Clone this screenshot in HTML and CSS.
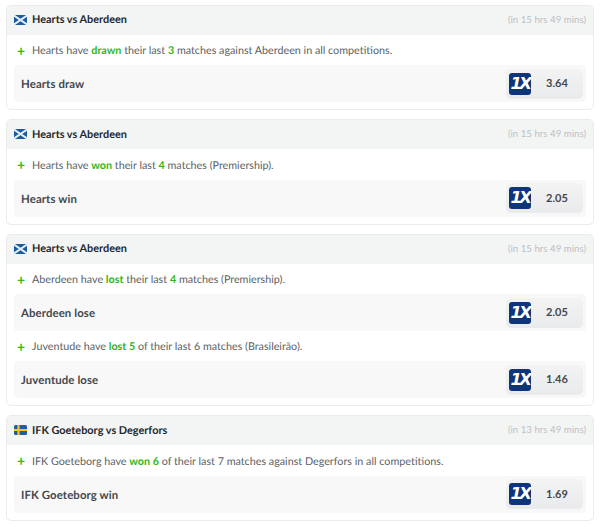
FILE: index.html
```html
<!DOCTYPE html>
<html lang="en">
<head>
<meta charset="utf-8">
<title>Trends</title>
<link rel="stylesheet" href="styles.css">
</head>
<body>
<svg class="defs" width="0" height="0" aria-hidden="true">
  <symbol id="sco" viewBox="0 0 13 10"><rect width="13" height="10" rx="1.5" fill="#1a5c9e"/><path d="M0 .5 13 9.5M13 .5 0 9.5" stroke="#e8eef5" stroke-width="2"/></symbol>
  <symbol id="swe" viewBox="0 0 13 10"><rect width="13" height="10" rx="1.5" fill="#1f5f9f"/><path d="M0 5H13M4.5 0V10" stroke="#f4c81e" stroke-width="2.2"/></symbol>
</svg>

<section class="card">
  <header class="head"><svg class="flag"><use href="#sco"/></svg><span class="title">Hearts vs Aberdeen</span><span class="time">(in 15 hrs 49 mins)</span></header>
  <div class="body">
    <p class="trend"><span class="plus">+</span><span>Hearts have <b>drawn</b> their last <b>3</b> matches against Aberdeen in all competitions.</span></p>
    <div class="bet"><span class="name">Hearts draw</span><span class="odds"><span class="logo">1X</span><span class="price">3.64</span></span></div>
  </div>
</section>

<section class="card">
  <header class="head"><svg class="flag"><use href="#sco"/></svg><span class="title">Hearts vs Aberdeen</span><span class="time">(in 15 hrs 49 mins)</span></header>
  <div class="body">
    <p class="trend"><span class="plus">+</span><span>Hearts have <b>won</b> their last <b>4</b> matches (Premiership).</span></p>
    <div class="bet"><span class="name">Hearts win</span><span class="odds"><span class="logo">1X</span><span class="price">2.05</span></span></div>
  </div>
</section>

<section class="card">
  <header class="head"><svg class="flag"><use href="#sco"/></svg><span class="title">Hearts vs Aberdeen</span><span class="time">(in 15 hrs 49 mins)</span></header>
  <div class="body">
    <p class="trend"><span class="plus">+</span><span>Aberdeen have <b>lost</b> their last <b>4</b> matches (Premiership).</span></p>
    <div class="bet"><span class="name">Aberdeen lose</span><span class="odds"><span class="logo">1X</span><span class="price">2.05</span></span></div>
    <p class="trend trend-next"><span class="plus">+</span><span>Juventude have <b>lost 5</b> of their last 6 matches (Brasileirão).</span></p>
    <div class="bet"><span class="name">Juventude lose</span><span class="odds"><span class="logo">1X</span><span class="price">1.46</span></span></div>
  </div>
</section>

<section class="card">
  <header class="head"><svg class="flag"><use href="#swe"/></svg><span class="title">IFK Goeteborg vs Degerfors</span><span class="time">(in 13 hrs 49 mins)</span></header>
  <div class="body">
    <p class="trend"><span class="plus">+</span><span>IFK Goeteborg have <b>won 6</b> of their last 7 matches against Degerfors in all competitions.</span></p>
    <div class="bet"><span class="name">IFK Goeteborg win</span><span class="odds"><span class="logo">1X</span><span class="price">1.69</span></span></div>
  </div>
</section>
</body>
</html>
```
FILE: styles.css
```css
* { box-sizing: border-box; }
html, body { margin: 0; background: #fff; }
body {
  padding: 4.5px 6px 0;
  font-family: Lato, "Open Sans", sans-serif;
  color: #4a4e55;
  display: flex;
  flex-direction: column;
  gap: 9px;
  text-rendering: geometricPrecision;
}
.defs { position: absolute; }
.card {
  border: 1px solid #e9ebec;
  border-radius: 5px;
  overflow: hidden;
  background: #fff;
}
.head {
  height: 29px;
  background: #f3f5f5;
  display: flex;
  align-items: center;
  padding: 0 7px 1px;
}
.flag { width: 13px; height: 10px; margin-right: 5px; flex: none; }
.title { font-size: 10.9px; font-weight: 700; color: #25282c; }
.time { margin-left: auto; font-size: 9.7px; color: #bcc0c3; }
.body { padding: 0 7px 7px; }
.trend {
  margin: 0;
  height: 30.5px;
  padding-top: 2px;
  display: flex;
  align-items: center;
  font-size: 10.75px;
  color: #5b5f66;
}
.trend-next { margin-top: -.5px; }
.plus { width: 18px; padding-left: 3px; font-size: 14px; font-weight: 700; color: #2fbd10; line-height: 1; }
.trend b { font-weight: 700; color: #2eb814; }
.bet {
  height: 37px;
  background: #f8f8f8;
  border-radius: 4px;
  display: flex;
  align-items: center;
  justify-content: space-between;
  padding: 0 3px 0 7px;
}
.name { font-size: 11.4px; font-weight: 700; color: #44484e; letter-spacing: .1px; padding-top: 2px; }
.odds {
  width: 77px;
  height: 30px;
  background: linear-gradient(#f3f3f4, #e9eaec);
  border-radius: 5px;
  display: flex;
  align-items: center;
  padding: 0 0 0 3px;
}
.logo {
  width: 22px;
  height: 22px;
  flex: none;
  background: #0d3578;
  border-radius: 3px;
  color: #fff;
  font-family: "DejaVu Sans", sans-serif;
  font-size: 16.5px;
  font-weight: 700;
  font-style: italic;
  letter-spacing: -2.5px;
  line-height: 22px;
  text-align: center;
  overflow: hidden;
}
.price { flex: 1; text-align: center; font-size: 11px; font-weight: 700; color: #44484e; }
```
